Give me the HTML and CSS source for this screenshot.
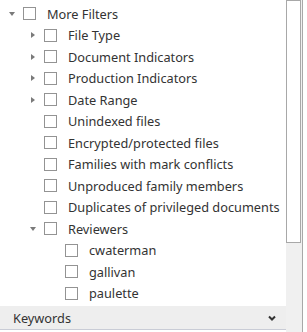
FILE: index.html
```html
<!DOCTYPE html>
<html>

<head>
    <meta charset="UTF-8">
    <title>Filters</title>
    <link rel="stylesheet" href="styles.css">
</head>

<body>
    <div id="panel">
        <div id="filter-area">
            <ul class="tree">
                <li class="row level-0">
                    <span class="toggle open"></span>
                    <span class="box"></span>
                    <span class="label">More Filters</span>
                </li>
                <li class="row level-1">
                    <span class="toggle closed"></span>
                    <span class="box"></span>
                    <span class="label">File Type</span>
                </li>
                <li class="row level-1">
                    <span class="toggle closed"></span>
                    <span class="box"></span>
                    <span class="label">Document Indicators</span>
                </li>
                <li class="row level-1">
                    <span class="toggle closed"></span>
                    <span class="box"></span>
                    <span class="label">Production Indicators</span>
                </li>
                <li class="row level-1">
                    <span class="toggle closed"></span>
                    <span class="box"></span>
                    <span class="label">Date Range</span>
                </li>
                <li class="row level-1">
                    <span class="toggle"></span>
                    <span class="box"></span>
                    <span class="label">Unindexed files</span>
                </li>
                <li class="row level-1">
                    <span class="toggle"></span>
                    <span class="box"></span>
                    <span class="label">Encrypted/protected files</span>
                </li>
                <li class="row level-1">
                    <span class="toggle"></span>
                    <span class="box"></span>
                    <span class="label">Families with mark conflicts</span>
                </li>
                <li class="row level-1">
                    <span class="toggle"></span>
                    <span class="box"></span>
                    <span class="label">Unproduced family members</span>
                </li>
                <li class="row level-1">
                    <span class="toggle"></span>
                    <span class="box"></span>
                    <span class="label">Duplicates of privileged documents</span>
                </li>
                <li class="row level-1">
                    <span class="toggle open"></span>
                    <span class="box"></span>
                    <span class="label">Reviewers</span>
                </li>
                <li class="row level-2">
                    <span class="toggle"></span>
                    <span class="box"></span>
                    <span class="label">cwaterman</span>
                </li>
                <li class="row level-2">
                    <span class="toggle"></span>
                    <span class="box"></span>
                    <span class="label">gallivan</span>
                </li>
                <li class="row level-2">
                    <span class="toggle"></span>
                    <span class="box"></span>
                    <span class="label">paulette</span>
                </li>
            </ul>
        </div>
        <div id="keywords-bar">
            <span>Keywords</span>
            <svg class="chevron" width="8" height="6" viewBox="0 0 8 6">
                <polyline points="1,1.5 4,4.5 7,1.5" fill="none" stroke="#333" stroke-width="2" />
            </svg>
        </div>
    </div>
    <div id="scrollbar">
        <div id="thumb"></div>
    </div>
</body>

</html>
```

FILE: styles.css
```css
body {
    margin: 0;
    height: 332px;
    display: flex;
    font-family: "Noto Sans", sans-serif;
    font-size: 12.75px;
    color: #333;
    overflow: hidden;
}

#panel {
    width: 286px;
    display: flex;
    flex-direction: column;
}

#filter-area {
    flex: 1;
    overflow: hidden;
}

.tree {
    list-style: none;
    margin: 0;
    padding: 3px 0 0 0;
}

.row {
    height: 21.5px;
    display: flex;
    align-items: center;
    white-space: nowrap;
}

.level-0 {
    padding-left: 6px;
}

.level-1 {
    padding-left: 27px;
}

.level-2 {
    padding-left: 48px;
}

.toggle {
    width: 11px;
    height: 11px;
    margin-right: 6px;
    display: flex;
    align-items: center;
    justify-content: center;
}

.toggle.open::before {
    content: "";
    border-left: 3px solid transparent;
    border-right: 3px solid transparent;
    border-top: 4px solid #7a7a7a;
    margin-top: 1px;
}

.toggle.closed::before {
    content: "";
    border-top: 3.5px solid transparent;
    border-bottom: 3.5px solid transparent;
    border-left: 4px solid #7a7a7a;
    margin-left: 1px;
}

.box {
    width: 13px;
    height: 13px;
    box-sizing: border-box;
    border: 1px solid #939393;
    background: #fff;
    margin-right: 11px;
}

#keywords-bar {
    height: 23px;
    margin-bottom: 2px;
    background: #eeeeee;
    border-bottom: 1px solid #c9ccd6;
    display: flex;
    align-items: center;
    justify-content: space-between;
    padding: 0 10px 0 13px;
}

#scrollbar {
    width: 16px;
    background: #f0f0f0;
    border-right: 1px solid #a8a8a8;
}

#thumb {
    height: 243px;
    width: 15px;
    box-sizing: border-box;
    border: 1px solid #a8a8a8;
    background: #fff;
}
```
